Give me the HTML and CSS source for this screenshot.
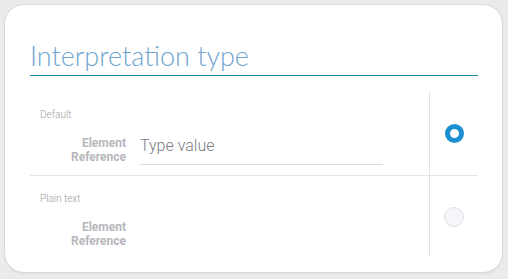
FILE: index.html
```html
<!DOCTYPE html>
<html lang="en">
<head>
  <meta charset="UTF-8">
  <meta name="viewport" content="width=device-width, initial-scale=1.0">
  <title>Interpretation type</title>
  <link rel="stylesheet" href="styles.css">
</head>
<body>
  <div class="card">
    <!-- header -->
    <div class="card-title">Interpretation type</div>

    <div class="options">
      <div class="option">
        <div class="option-body">
          <div class="option-name">Default</div>
          <div class="field">
            <div class="field-label">Element<br>Reference</div>
            <div class="field-input">Type value</div>
          </div>
        </div>
        <div class="option-pick">
          <span class="radio checked"></span>
        </div>
      </div>

      <div class="option">
        <div class="option-body">
          <div class="option-name">Plain text</div>
          <div class="field">
            <div class="field-label">Element<br>Reference</div>
          </div>
        </div>
        <div class="option-pick">
          <span class="radio"></span>
        </div>
      </div>
    </div>
  </div>
</body>
</html>
```

FILE: styles.css
```css
body {
  margin: 0;
  background: #ebebed;
  font-family: Roboto, "Liberation Sans", sans-serif;
}
.card {
  box-sizing: border-box;
  width: 499px;
  height: 269px;
  margin: 4px;
  padding: 33px 24px 0 25px;
  background: #fff;
  border: 1px solid #d9d9dc;
  border-radius: 20px;
  box-shadow: 0 1px 2px rgba(0, 0, 0, 0.06);
}
.card-title {
  font-family: Lato, "Open Sans", sans-serif;
  font-weight: 300;
  font-size: 27px;
  line-height: 36px;
  color: #6ea5d0;
  padding-bottom: 1px;
  border-bottom: 1px solid #1f8cae;
}
.options {
  margin-top: 16px;
}
.option {
  display: flex;
}
.option + .option {
  border-top: 1px solid #e6e6e8;
}
.option-body {
  flex: 1;
  padding: 17px 0 10px 10px;
  border-right: 1px solid #e3e3e6;
}
.option:last-child .option-body {
  padding-bottom: 9px;
}
.option-name {
  font-size: 10px;
  line-height: 12px;
  font-weight: 300;
  color: #9c9ca0;
}
.field {
  display: flex;
  align-items: flex-start;
  margin-top: 15px;
}
.field-label {
  width: 86px;
  text-align: right;
  font-size: 12px;
  line-height: 14px;
  font-weight: bold;
  color: #b7b7bc;
}
.field-input {
  width: 243px;
  margin-left: 14px;
  padding-bottom: 8px;
  font-size: 16px;
  line-height: 20px;
  font-weight: 300;
  color: #7b7b80;
  border-bottom: 1px solid #dcdcdf;
}
.option-pick {
  width: 48px;
  display: flex;
  align-items: center;
  justify-content: center;
}
.radio {
  box-sizing: border-box;
  width: 20px;
  height: 20px;
  border-radius: 50%;
  border: 1.5px solid #dfe0e4;
  background: #f5f6fa;
}
.radio.checked {
  width: 19px;
  height: 19px;
  border: 5px solid #1b8fd2;
  background: #fff;
}
```
